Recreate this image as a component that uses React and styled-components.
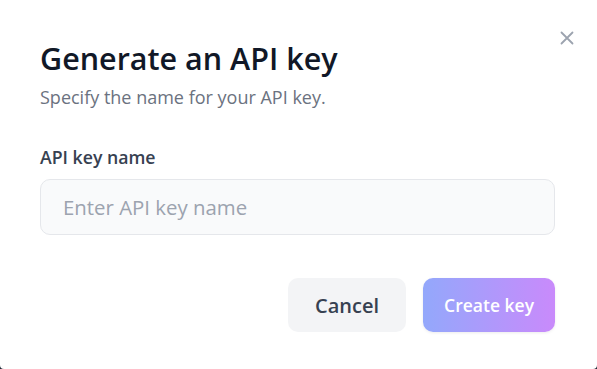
import styled, { createGlobalStyle } from 'styled-components';

const Global = createGlobalStyle`
  html, body {
    margin: 0;
    padding: 0;
    background: #1f2937;
  }
  body {
    font-family: "Open Sans", "Noto Sans", sans-serif;
  }
`;

function App() {
  return (
    <>
      <Global />
      <Modal>
        <Close aria-label="Close">
          <svg width="14" height="14" viewBox="0 0 14 14" fill="none">
            <path d="M1.5 1.5L12.5 12.5M12.5 1.5L1.5 12.5" stroke="#9ca3af" strokeWidth="1.8" strokeLinecap="round" />
          </svg>
        </Close>
        <Title>Generate an API key</Title>
        <Subtitle>Specify the name for your API key.</Subtitle>
        <Field>
          <Label htmlFor="key-name">API key name</Label>
          <Input id="key-name" placeholder="Enter API key name" />
        </Field>
        <Actions>
          <Button>Cancel</Button>
          <Button primary>Create key</Button>
        </Actions>
      </Modal>
    </>
  );
}

const Modal = styled.div`
  position: relative;
  box-sizing: border-box;
  width: 597px;
  height: 369px;
  background: #ffffff;
  border-radius: 0 0 4px 4px;
  padding: 36px 42px 0 40px;
  display: flex;
  flex-direction: column;
`;

const Close = styled.button`
  position: absolute;
  top: 31px;
  right: 23px;
  background: none;
  border: none;
  padding: 0;
  display: flex;
  cursor: pointer;
`;

const Title = styled.h2`
  margin: 0;
  font-size: 30.5px;
  font-weight: 600;
  line-height: 44px;
  color: #111827;
`;

const Subtitle = styled.p`
  margin: 4px 0 0;
  font-size: 18px;
  line-height: 26px;
  color: #6b7280;
`;

const Field = styled.div`
  display: flex;
  flex-direction: column;
  gap: 9px;
  margin-top: 34px;
`;

const Label = styled.label`
  font-size: 17.7px;
  font-weight: 600;
  line-height: 26px;
  color: #374151;
`;

const Input = styled.input`
  box-sizing: border-box;
  height: 56px;
  padding: 0 22px;
  border: 1px solid #e5e7eb;
  border-radius: 10px;
  background: #f9fafb;
  font-family: inherit;
  font-size: 20.4px;
  color: #111827;
  outline: none;

  &::placeholder {
    color: #9ca3af;
  }
`;

const Actions = styled.div`
  display: flex;
  justify-content: flex-end;
  gap: 17px;
  margin-top: 43px;
`;

const Button = styled.button`
  height: 54px;
  padding: 0 ${p => (p.primary ? '21px' : '27px')};
  border: none;
  border-radius: 10px;
  font-family: inherit;
  font-size: ${p => (p.primary ? '17.5px' : '20px')};
  font-weight: 600;
  cursor: pointer;
  color: ${p => (p.primary ? '#ffffff' : '#374151')};
  background: ${p => (p.primary ? 'linear-gradient(90deg, #93a8fb, #c98afb)' : '#f3f4f6')};
  box-shadow: ${p => (p.primary ? '0 1px 3px rgba(0,0,0,0.08)' : 'none')};
`;

export default App;
